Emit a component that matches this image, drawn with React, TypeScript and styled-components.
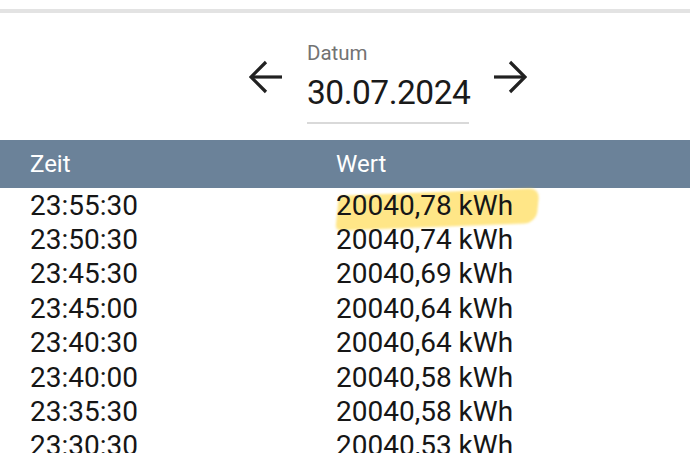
import * as React from 'react';
import styled, { createGlobalStyle } from 'styled-components';

const GlobalStyle = createGlobalStyle`
  html, body {
    margin: 0;
    padding: 0;
    background: #fff;
    font-family: Roboto, "Noto Sans", sans-serif;
    color: #1c1c1c;
    overflow: hidden;
  }
`;

const Page = styled.div`
  width: 690px;
  height: 453px;
  overflow: hidden;
  padding-top: 9px;
  box-sizing: border-box;
`;

const TopRule = styled.div`
  height: 4px;
  background: #e3e3e3;
`;

const DateBar = styled.div`
  display: flex;
  justify-content: center;
  padding: 28px 0 0 86px;
  height: 127px;
  box-sizing: border-box;
`;

const DateNav = styled.div`
  display: flex;
  align-items: flex-start;
  gap: 24px;
`;

const ArrowButton = styled.button`
  border: 0;
  background: none;
  padding: 0;
  margin-top: 19px;
  width: 34px;
  height: 34px;
  color: #212121;
  cursor: pointer;
  display: flex;
`;

const Field = styled.div`
  width: 162px;
  border-bottom: 2px solid #d9d9d9;
  padding-bottom: 7px;
`;

const FieldLabel = styled.div`
  font-size: 20.5px;
  line-height: 24px;
  color: #737373;
`;

const FieldValue = styled.div`
  margin-top: 6px;
  font-size: 33.5px;
  line-height: 44px;
  letter-spacing: -0.5px;
  color: #1a1a1a;
  white-space: nowrap;
`;

const Table = styled.div`
  display: flex;
  flex-direction: column;
`;

const HeaderRow = styled.div`
  display: grid;
  grid-template-columns: 306px 1fr;
  height: 48px;
  align-items: center;
  background: #6b8299;
  color: #fff;
  font-size: 24px;
  padding-left: 30px;
`;

const Row = styled.div`
  display: grid;
  grid-template-columns: 306px 1fr;
  height: 34.4px;
  align-items: center;
  padding-left: 30px;
  font-size: 28px;
  color: #161616;
`;

const ValueCell = styled.div`
  position: relative;
`;

const ValueText = styled.span`
  position: relative;
  z-index: 1;
`;

const Marker = styled.span`
  position: absolute;
  left: 1px;
  top: 3px;
  width: 201px;
  height: 35px;
  background: rgba(255, 214, 55, 0.6);
  border-radius: 4px 10px 12px 6px;
  filter: blur(1.3px);
  transform: rotate(-2.2deg) skewX(-8deg);
  z-index: 0;
`;

const Arrow: React.FC<{ dir: 'left' | 'right' }> = ({ dir }) => (
  <svg width="34" height="34" viewBox="0 0 34 34" fill="none" stroke="currentColor" strokeWidth="3.2">
    {dir === 'left' ? (
      <>
        <path d="M33 17H3" />
        <path d="M17 2L2 17l15 15" strokeLinejoin="miter" />
      </>
    ) : (
      <>
        <path d="M1 17h30" />
        <path d="M17 2l15 15-15 15" strokeLinejoin="miter" />
      </>
    )}
  </svg>
);

const rows = [
  ['23:55:30', '20040,78 kWh'],
  ['23:50:30', '20040,74 kWh'],
  ['23:45:30', '20040,69 kWh'],
  ['23:45:00', '20040,64 kWh'],
  ['23:40:30', '20040,64 kWh'],
  ['23:40:00', '20040,58 kWh'],
  ['23:35:30', '20040,58 kWh'],
  ['23:30:30', '20040,53 kWh'],
];

export default function App() {
  return (
    <Page>
      <GlobalStyle />
      <TopRule />
      <DateBar>
        <DateNav>
          <ArrowButton aria-label="zurück">
            <Arrow dir="left" />
          </ArrowButton>
          <Field>
            <FieldLabel>Datum</FieldLabel>
            <FieldValue>30.07.2024</FieldValue>
          </Field>
          <ArrowButton aria-label="weiter">
            <Arrow dir="right" />
          </ArrowButton>
        </DateNav>
      </DateBar>
      <Table>
        <HeaderRow>
          <div>Zeit</div>
          <div>Wert</div>
        </HeaderRow>
        {rows.map(([time, value], i) => (
          <Row key={time + value}>
            <div>{time}</div>
            <ValueCell>
              {i === 0 && <Marker />}
              <ValueText>{value}</ValueText>
            </ValueCell>
          </Row>
        ))}
      </Table>
    </Page>
  );
}
